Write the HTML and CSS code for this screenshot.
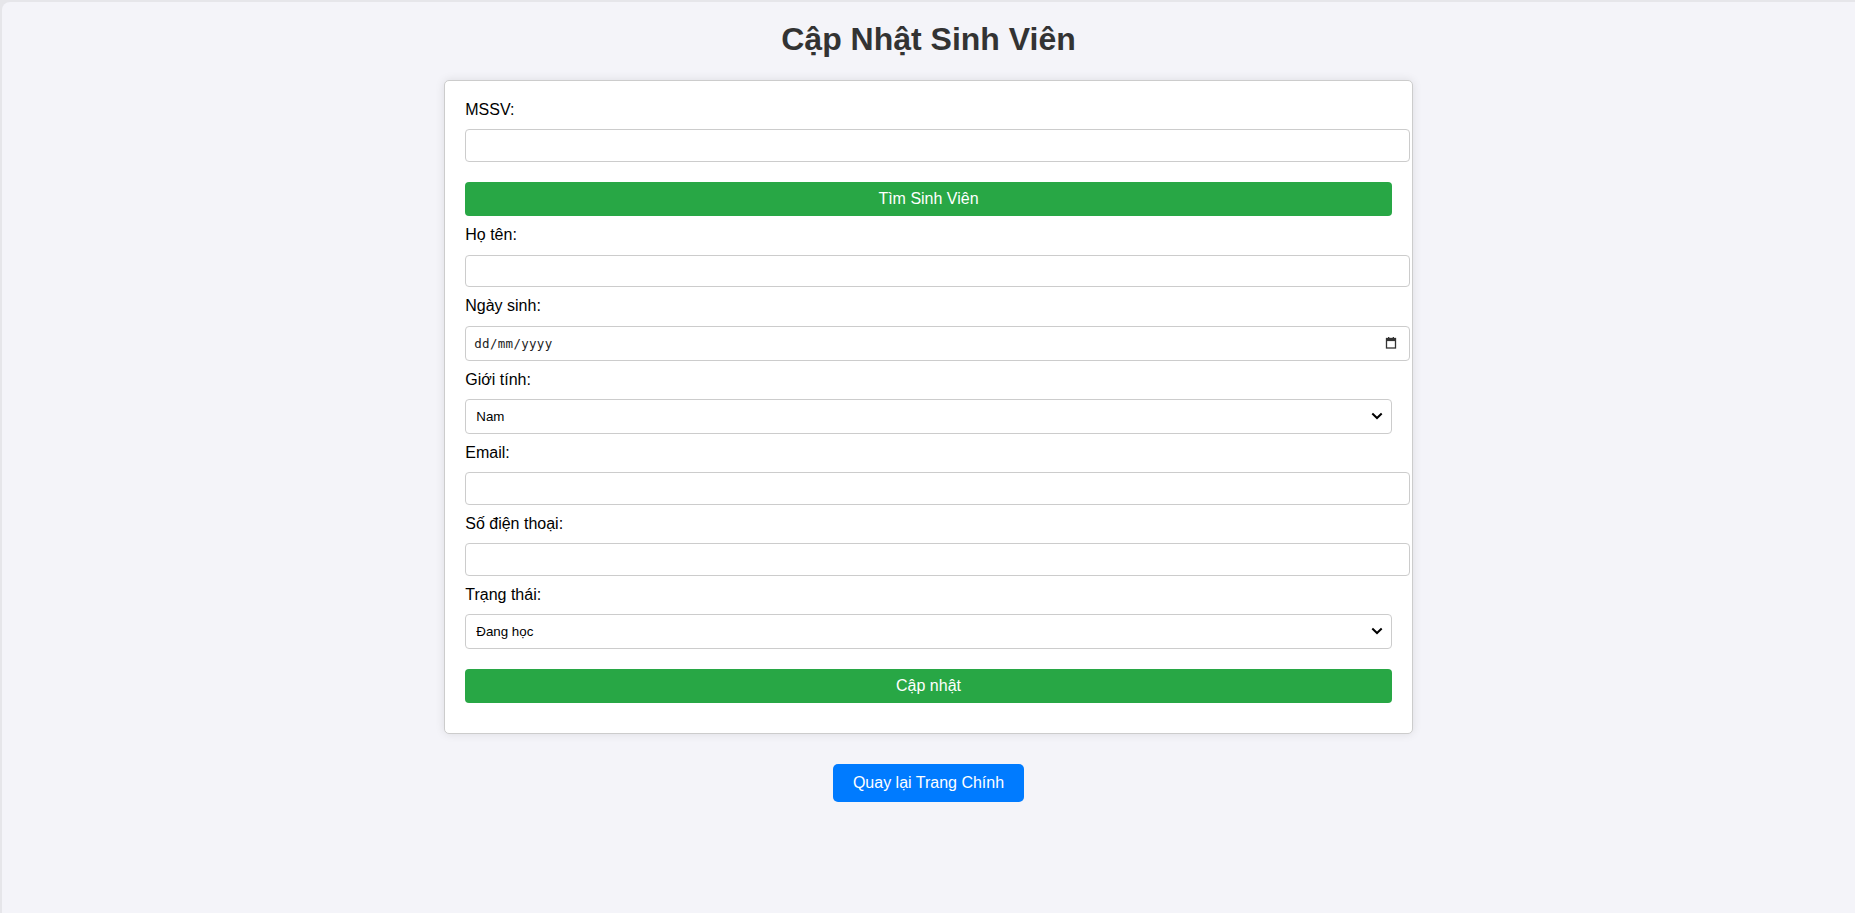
FILE: index.html
```html
<!DOCTYPE html>
<html lang="vi">
<head>
<meta charset="utf-8">
<title>Cập Nhật Sinh Viên</title>
<link rel="stylesheet" href="styles.css">
</head>
<body>
<div class="frame"></div>
<h1 class="title">Cập Nhật Sinh Viên</h1>
<div class="card">
  <form class="form">
    <label class="field-label" for="mssv">MSSV:</label>
    <input class="field-input" type="text" id="mssv">
    <button class="btn-green" type="button">Tìm Sinh Viên</button>
  </form>
  <form class="form">
    <label class="field-label" for="hoten">Họ tên:</label>
    <input class="field-input" type="text" id="hoten">
    <label class="field-label" for="ngaysinh">Ngày sinh:</label>
    <div class="date-field">
      <input class="date-text" type="text" id="ngaysinh" placeholder="dd/mm/yyyy">
      <svg class="date-icon" width="12" height="12" viewBox="0 0 12 12" aria-hidden="true">
        <rect x="1.5" y="1.5" width="9" height="9.5" fill="none" stroke="#333" stroke-width="1.3"/>
        <rect x="1.5" y="1.5" width="9" height="2.6" fill="#333"/>
        <rect x="3" y="0" width="1.3" height="2" fill="#333"/>
        <rect x="7.7" y="0" width="1.3" height="2" fill="#333"/>
      </svg>
    </div>
    <label class="field-label" for="gioitinh">Giới tính:</label>
    <div class="select-wrap">
      <select class="field-select" id="gioitinh">
        <option>Nam</option>
        <option>Nữ</option>
      </select>
      <svg class="chevron" width="12" height="8" viewBox="0 0 12 8" aria-hidden="true">
        <path d="M1.3 1.5 L6 6 L10.7 1.5" fill="none" stroke="#000" stroke-width="2"/>
      </svg>
    </div>
    <label class="field-label" for="email">Email:</label>
    <input class="field-input" type="text" id="email">
    <label class="field-label" for="sdt">Số điện thoại:</label>
    <input class="field-input" type="text" id="sdt">
    <label class="field-label" for="trangthai">Trạng thái:</label>
    <div class="select-wrap">
      <select class="field-select" id="trangthai">
        <option>Đang học</option>
        <option>Đã tốt nghiệp</option>
      </select>
      <svg class="chevron" width="12" height="8" viewBox="0 0 12 8" aria-hidden="true">
        <path d="M1.3 1.5 L6 6 L10.7 1.5" fill="none" stroke="#000" stroke-width="2"/>
      </svg>
    </div>
    <button class="btn-green" type="button">Cập nhật</button>
  </form>
</div>
<div class="back-row"><a class="btn-back" href="#">Quay lại Trang Chính</a></div>
</body>
</html>
```
FILE: styles.css
```css
html {
  background: #f4f4f9;
}
body {
  margin: 0 0 0 2px;
  font-family: "Liberation Sans", Arial, sans-serif;
  background: #f4f4f9;
  color: #000;
}
.frame {
  position: fixed;
  top: 2px;
  left: 2px;
  right: -20px;
  bottom: -20px;
  border-top-left-radius: 8px;
  box-shadow: 0 0 0 12px #e6e6ea;
  pointer-events: none;
}
.title {
  text-align: center;
  color: #333;
  font-size: 32px;
  font-weight: bold;
  margin: 21.44px 0;
}
.card {
  width: 50%;
  margin: 0 auto;
  padding: 20px;
  background: #fff;
  border: 1px solid #ccc;
  border-radius: 5px;
  box-shadow: 0 0 10px rgba(0, 0, 0, 0.1);
}
.form {
  display: flex;
  flex-direction: column;
  align-items: stretch;
}
.field-label {
  display: block;
  font-size: 16px;
  line-height: 18.6px;
  margin-bottom: 10px;
}
.field-input {
  display: block;
  width: 100%;
  height: 14.4px;
  padding: 8px;
  border: 1px solid #ccc;
  border-radius: 4px;
  margin: 0 0 10px;
  font-family: "Liberation Sans", Arial, sans-serif;
  font-size: 13.33px;
  background: #fff;
}
.date-field {
  display: flex;
  align-items: center;
  box-sizing: border-box;
  width: calc(100% + 18px);
  height: 35px;
  padding: 0 12px 0 8px;
  border: 1px solid #ccc;
  border-radius: 4px;
  margin: 0 0 10px;
  background: #fff;
}
.date-text {
  flex: 1;
  min-width: 0;
  border: none;
  outline: none;
  padding: 0;
  margin: 0;
  background: transparent;
  font-family: "DejaVu Sans Mono", "Liberation Mono", monospace;
  font-size: 12.5px;
  letter-spacing: 0.3px;
  color: #000;
}
.date-text::placeholder {
  color: #222;
  opacity: 1;
}
.date-icon {
  flex: none;
  display: block;
}
.select-wrap {
  position: relative;
  margin: 0 0 10px;
}
.field-select {
  display: block;
  width: 100%;
  height: 34.4px;
  padding: 8px 30px 8px 10px;
  border: 1px solid #ccc;
  border-radius: 4px;
  margin: 0;
  font-family: "Liberation Sans", Arial, sans-serif;
  font-size: 13.33px;
  background: #fff;
  color: #000;
  -webkit-appearance: none;
  appearance: none;
}
.chevron {
  position: absolute;
  right: 9px;
  top: 13px;
  pointer-events: none;
}
.btn-green {
  display: block;
  width: 100%;
  padding: 8px;
  margin: 10px 0;
  border: none;
  border-radius: 4px;
  background: #28a745;
  color: #fff;
  font-family: "Liberation Sans", Arial, sans-serif;
  font-size: 16px;
  line-height: 18.4px;
}
.back-row {
  text-align: center;
  margin-top: 30px;
}
.btn-back {
  display: inline-block;
  padding: 10px 20px;
  background: #007bff;
  color: #fff;
  border-radius: 5px;
  text-decoration: none;
  font-size: 16px;
  line-height: 18px;
}
```
